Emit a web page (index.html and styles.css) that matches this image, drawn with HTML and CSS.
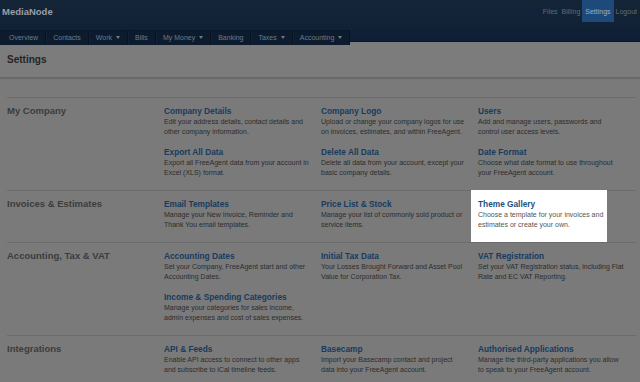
FILE: index.html
```html
<!DOCTYPE html>
<html lang="en">

<head>
  <meta charset="UTF-8" />
  <title>Settings - MediaNode</title>
  <link rel="stylesheet" href="styles.css">
</head>

<body>
  <header class="header">
    <div class="topbar">
      <span class="brand">MediaNode</span>
      <nav class="account-links">
        <a href="#">Files</a>
        <a href="#">Billing</a>
        <a href="#" class="active">Settings</a>
        <a href="#">Logout</a>
      </nav>
    </div>
    <div class="navrow">
      <nav class="mainnav">
        <a href="#">Overview</a>
        <a href="#">Contacts</a>
        <a href="#" class="drop">Work</a>
        <a href="#">Bills</a>
        <a href="#" class="drop">My Money</a>
        <a href="#">Banking</a>
        <a href="#" class="drop">Taxes</a>
        <a href="#" class="drop">Accounting</a>
      </nav>
    </div>
  </header>

  <div class="titlebar">
    <h1>Settings</h1>
  </div>

  <main class="settings">
    <section class="group">
      <h2>My Company</h2>
      <div class="items">
        <div class="item">
          <a href="#">Company Details</a>
          <p>Edit your address details, contact details and<br>other company information.</p>
        </div>
        <div class="item">
          <a href="#">Company Logo</a>
          <p>Upload or change your company logos for use<br>on invoices, estimates, and within FreeAgent.</p>
        </div>
        <div class="item">
          <a href="#">Users</a>
          <p>Add and manage users, passwords and<br>control user access levels.</p>
        </div>
        <div class="item">
          <a href="#">Export All Data</a>
          <p>Export all FreeAgent data from your account in<br>Excel (XLS) format.</p>
        </div>
        <div class="item">
          <a href="#">Delete All Data</a>
          <p>Delete all data from your account, except your<br>basic company details.</p>
        </div>
        <div class="item">
          <a href="#">Date Format</a>
          <p>Choose what date format to use throughout<br>your FreeAgent account.</p>
        </div>
      </div>
    </section>

    <section class="group">
      <h2>Invoices &amp; Estimates</h2>
      <div class="items">
        <div class="item">
          <a href="#">Email Templates</a>
          <p>Manage your New Invoice, Reminder and<br>Thank You email templates.</p>
        </div>
        <div class="item">
          <a href="#">Price List &amp; Stock</a>
          <p>Manage your list of commonly sold product or<br>service items.</p>
        </div>
        <div class="item spotlight">
          <a href="#">Theme Gallery</a>
          <p>Choose a template for your invoices and<br>estimates or create your own.</p>
        </div>
      </div>
    </section>

    <section class="group">
      <h2>Accounting, Tax &amp; VAT</h2>
      <div class="items">
        <div class="item">
          <a href="#">Accounting Dates</a>
          <p>Set your Company, FreeAgent start and other<br>Accounting Dates.</p>
        </div>
        <div class="item">
          <a href="#">Initial Tax Data</a>
          <p>Your Losses Brought Forward and Asset Pool<br>Value for Corporation Tax.</p>
        </div>
        <div class="item">
          <a href="#">VAT Registration</a>
          <p>Set your VAT Registration status, including Flat<br>Rate and EC VAT Reporting.</p>
        </div>
        <div class="item">
          <a href="#">Income &amp; Spending Categories</a>
          <p>Manage your categories for sales income,<br>admin expenses and cost of sales expenses.</p>
        </div>
      </div>
    </section>

    <section class="group">
      <h2>Integrations</h2>
      <div class="items">
        <div class="item">
          <a href="#">API &amp; Feeds</a>
          <p>Enable API access to connect to other apps<br>and subscribe to iCal timeline feeds.</p>
        </div>
        <div class="item">
          <a href="#">Basecamp</a>
          <p>Import your Basecamp contact and project<br>data into your FreeAgent account.</p>
        </div>
        <div class="item">
          <a href="#">Authorised Applications</a>
          <p>Manage the third-party applications you allow<br>to speak to your FreeAgent account.</p>
        </div>
      </div>
    </section>
  </main>
</body>

</html>
```

FILE: styles.css
```css
:root {
  --page-bg: #7a7a7a;
  --rule: #6b6b6b;
  --link: #173a5f;
  --link-lit: #1e4f7e;
  --text: #2c2c2c;
  --text-lit: #555;
  --label: #3c3c3c;
}

body {
  margin: 0;
  font-family: 'Liberation Sans', Arial, sans-serif;
  background-color: var(--page-bg);
  overflow: hidden;
}

a {
  text-decoration: none;
}

/* header */

.header {
  background: linear-gradient(#152538, #0e1f35);
  border-bottom: 1px solid #0a1526;
}

.topbar {
  height: 26px;
  display: flex;
  align-items: flex-start;
  justify-content: space-between;
}

.brand {
  padding: 6px 0 0 2px;
  font-size: 9.5px;
  font-weight: bold;
  color: #979fa8;
  line-height: 12px;
}

.account-links {
  display: flex;
  padding-right: 1px;
}

.account-links a {
  padding: 0 2px;
  height: 22px;
  line-height: 24px;
  font-size: 7px;
  color: #5f6d7d;
}

.account-links a.active {
  padding: 0 3px;
  background-color: #1d4a7a;
  color: #9fb0c4;
}

.navrow {
  height: 15px;
}

.mainnav {
  display: inline-flex;
  height: 15px;
  padding-left: 2px;
  background-color: #0c1b2e;
  border-top: 1px solid #0a1728;
  border-right: 1px solid #08131f;
  box-sizing: border-box;
}

.mainnav a {
  display: flex;
  align-items: center;
  padding: 0 7px;
  font-size: 7px;
  color: #6d7b8b;
  border-right: 1px solid #08131f;
  box-shadow: 1px 0 0 #112236;
}

.mainnav a:last-child {
  border-right: none;
  box-shadow: none;
}

.mainnav a.drop::after {
  content: "";
  margin-left: 4px;
  border-left: 2.5px solid transparent;
  border-right: 2.5px solid transparent;
  border-top: 3px solid #6d7b8b;
}

/* page title */

.titlebar {
  height: 35px;
  padding-left: 7px;
  background-color: #7c7c7c;
  border-bottom: 1px solid #666;
  box-shadow: 0 1px 1px rgba(0, 0, 0, 0.12);
  display: flex;
  align-items: center;
}

.titlebar h1 {
  margin: 0;
  font-size: 10px;
  color: #252525;
}

/* settings groups */

.settings {
  padding: 19px 4px 0 7px;
}

.group {
  display: flex;
  border-top: 1px solid var(--rule);
  padding: 7px 0 12px;
}

.group h2 {
  width: 157px;
  flex-shrink: 0;
  margin: 0;
  font-size: 9.5px;
  line-height: 12px;
  color: var(--label);
}

.items {
  display: grid;
  grid-template-columns: repeat(3, 157px);
  row-gap: 9px;
}

.item a {
  display: block;
  font-size: 8.3px;
  font-weight: bold;
  line-height: 12px;
  color: var(--link);
}

.item p {
  margin: 0;
  font-size: 7px;
  line-height: 10px;
  color: var(--text);
  white-space: nowrap;
}

/* highlighted item sits above the dimmed page */
.item.spotlight {
  justify-self: start;
  margin: -8px 0 -12px -7px;
  padding: 8px 4px 12px 7px;
  background-color: #fff;
}

.item.spotlight a {
  color: var(--link-lit);
}

.item.spotlight p {
  color: var(--text-lit);
}
```
